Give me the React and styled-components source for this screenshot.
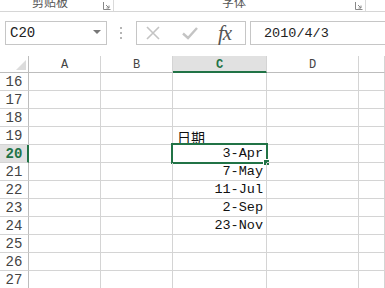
import React from 'react';
import styled, { createGlobalStyle } from 'styled-components';

const GlobalStyle = createGlobalStyle`
  html, body { margin: 0; padding: 0; background: #fff; overflow: hidden; }
  body { font-family: "Liberation Mono", "Noto Sans CJK SC", monospace; }
`;

const GREEN = '#217346';
const GRID = '#d4d4d4';

const Page = styled.div`
  width: 385px;
  height: 288px;
  overflow: hidden;
  background: #fff;
`;

/* ribbon group labels, cut off at the top */
const RibbonStrip = styled.div`
  display: flex;
  height: 11px;
  border-bottom: 1px solid #d6d6d6;
  overflow: hidden;
`;

const RibbonGroup = styled.div`
  position: relative;
  display: flex;
  align-items: flex-end;
  width: ${(p) => p.$width}px;
  border-right: 1px solid #dadada;
  box-sizing: border-box;
  height: 11px;
`;

const RibbonLabel = styled.span`
  font-family: "Noto Sans CJK SC", sans-serif;
  font-size: 12px;
  line-height: 12px;
  color: #555;
  margin-left: ${(p) => p.$left}px;
  margin-bottom: 3px;
  white-space: nowrap;
`;

const Launcher = styled.svg`
  position: absolute;
  right: 2px;
  top: 2px;
`;

const FormulaBar = styled.div`
  display: flex;
  align-items: center;
  height: 24px;
  margin-top: 9px;
  padding-left: 5px;
`;

const NameBox = styled.div`
  display: flex;
  align-items: center;
  justify-content: space-between;
  width: 102px;
  height: 24px;
  box-sizing: border-box;
  border: 1px solid #c6c6c6;
  padding: 0 5px 0 4px;
  font-size: 14px;
  color: #222;
`;

const Caret = styled.span`
  width: 0;
  height: 0;
  border-left: 4px solid transparent;
  border-right: 4px solid transparent;
  border-top: 4px solid #777;
  margin-top: -2px;
`;

const Grip = styled.div`
  display: flex;
  flex-direction: column;
  gap: 3px;
  margin: 0 14px 0 13px;
  span {
    width: 2px;
    height: 2px;
    background: #b5b5b5;
  }
`;

const ButtonBox = styled.div`
  display: flex;
  align-items: center;
  width: 110px;
  height: 24px;
  box-sizing: border-box;
  border: 1px solid #c6c6c6;
  padding-left: 9px;
  gap: 0;
`;

const IconSlot = styled.div`
  width: ${(p) => p.$w}px;
  display: flex;
  align-items: center;
`;

const Fx = styled.span`
  font-family: "Liberation Serif", serif;
  font-style: italic;
  font-size: 21px;
  color: #555;
  line-height: 20px;
  letter-spacing: -1px;
`;

const FormulaInput = styled.div`
  flex: 1;
  height: 24px;
  box-sizing: border-box;
  border: 1px solid #c6c6c6;
  border-right: none;
  margin-left: 4px;
  padding-left: 13px;
  display: flex;
  align-items: center;
  font-size: 13.5px;
  color: #222;
`;

const Sheet = styled.div`
  display: grid;
  grid-template-columns: 29px 72px 72px 94px 92px 1fr;
  grid-template-rows: 17px repeat(12, 18px);
  margin-top: 11px;
`;

const Corner = styled.div`
  position: relative;
  border-right: 1px solid #bdbdbd;
  border-bottom: 1px solid #bdbdbd;
  &::after {
    content: '';
    position: absolute;
    right: 2px;
    bottom: 2px;
    border-left: 10px solid transparent;
    border-bottom: 10px solid #dcdcdc;
  }
`;

const ColHead = styled.div`
  display: flex;
  align-items: center;
  justify-content: center;
  box-sizing: border-box;
  border-right: 1px solid ${GRID};
  border-bottom: ${(p) => (p.$active ? `2px solid ${GREEN}` : '1px solid #bdbdbd')};
  background: ${(p) => (p.$active ? '#e1e1e1' : '#fff')};
  color: ${(p) => (p.$active ? GREEN : '#444')};
  font-family: "Liberation Mono", monospace;
  font-weight: ${(p) => (p.$active ? 700 : 400)};
  font-size: 12px;
  padding-top: 2px;
`;

const RowHead = styled.div`
  display: flex;
  align-items: flex-end;
  justify-content: center;
  box-sizing: border-box;
  border-right: ${(p) => (p.$active ? `2px solid ${GREEN}` : '1px solid #bdbdbd')};
  border-bottom: 1px solid ${GRID};
  background: ${(p) => (p.$active ? '#e1e1e1' : '#fff')};
  color: ${(p) => (p.$active ? GREEN : '#444')};
  font-weight: ${(p) => (p.$active ? 700 : 400)};
  font-size: 14px;
  line-height: 16px;
  padding-left: ${(p) => (p.$active ? 1 : 0)}px;
`;

const Cell = styled.div`
  position: relative;
  display: flex;
  align-items: flex-end;
  justify-content: ${(p) => (p.$right ? 'flex-end' : 'flex-start')};
  box-sizing: border-box;
  border-right: 1px solid ${GRID};
  border-bottom: 1px solid ${GRID};
  padding: 0 3px 0 4px;
  font-size: 13.5px;
  line-height: 16px;
  color: #111;
  white-space: nowrap;
`;

const CjkText = styled.span`
  font-family: "Noto Sans CJK SC", sans-serif;
  font-size: 14px;
  line-height: 16px;
  margin-bottom: -1px;
`;

const Selection = styled.div`
  position: absolute;
  left: -2px;
  top: -2px;
  right: -2px;
  bottom: -2px;
  border: 2px solid ${GREEN};
  pointer-events: none;
  &::after {
    content: '';
    position: absolute;
    right: -4px;
    bottom: -4px;
    width: 5px;
    height: 5px;
    background: ${GREEN};
    border: 1px solid #fff;
  }
`;

const columns = ['A', 'B', 'C', 'D', ''];
const data = {
  19: { text: '日期', cjk: true },
  20: { text: '3-Apr' },
  21: { text: '7-May' },
  22: { text: '11-Jul' },
  23: { text: '2-Sep' },
  24: { text: '23-Nov' },
};
const rows = [16, 17, 18, 19, 20, 21, 22, 23, 24, 25, 26, 27];

function LauncherIcon() {
  return (
    <Launcher width="8" height="8" viewBox="0 0 8 8">
      <path d="M0.5 0 V7.5 H7.5" stroke="#888" fill="none" strokeWidth="1" />
      <path d="M3 3 L6 6 M6 3.5 V6 H3.5" stroke="#888" fill="none" strokeWidth="1" />
    </Launcher>
  );
}

export default function App() {
  return (
    <Page>
      <GlobalStyle />
      <RibbonStrip>
        <RibbonGroup $width={114}>
          <RibbonLabel $left={32}>剪贴板</RibbonLabel>
          <LauncherIcon />
        </RibbonGroup>
        <RibbonGroup $width={252}>
          <RibbonLabel $left={108}>字体</RibbonLabel>
          <LauncherIcon />
        </RibbonGroup>
      </RibbonStrip>

      <FormulaBar>
        <NameBox>
          C20
          <Caret />
        </NameBox>
        <Grip>
          <span />
          <span />
          <span />
        </Grip>
        <ButtonBox>
          <IconSlot $w={36}>
            <svg width="14" height="14" viewBox="0 0 14 14">
              <path d="M1 1 L13 13 M13 1 L1 13" stroke="#c4c4c4" strokeWidth="1.6" />
            </svg>
          </IconSlot>
          <IconSlot $w={36}>
            <svg width="16" height="14" viewBox="0 0 16 14">
              <path d="M1 7.5 L6 12 L15 2" stroke="#c4c4c4" strokeWidth="2.4" fill="none" />
            </svg>
          </IconSlot>
          <IconSlot $w={24}>
            <Fx>fx</Fx>
          </IconSlot>
        </ButtonBox>
        <FormulaInput>2010/4/3</FormulaInput>
      </FormulaBar>

      <Sheet>
        <Corner />
        {columns.map((c, i) => (
          <ColHead key={i} $active={c === 'C'}>
            {c}
          </ColHead>
        ))}
        {rows.map((r) => (
          <React.Fragment key={r}>
            <RowHead $active={r === 20}>{r}</RowHead>
            {columns.map((c, i) => {
              const v = c === 'C' ? data[r] : null;
              return (
                <Cell key={i} $right={v && !v.cjk}>
                  {v && (v.cjk ? <CjkText>{v.text}</CjkText> : v.text)}
                  {c === 'C' && r === 20 && <Selection />}
                </Cell>
              );
            })}
          </React.Fragment>
        ))}
      </Sheet>
    </Page>
  );
}
